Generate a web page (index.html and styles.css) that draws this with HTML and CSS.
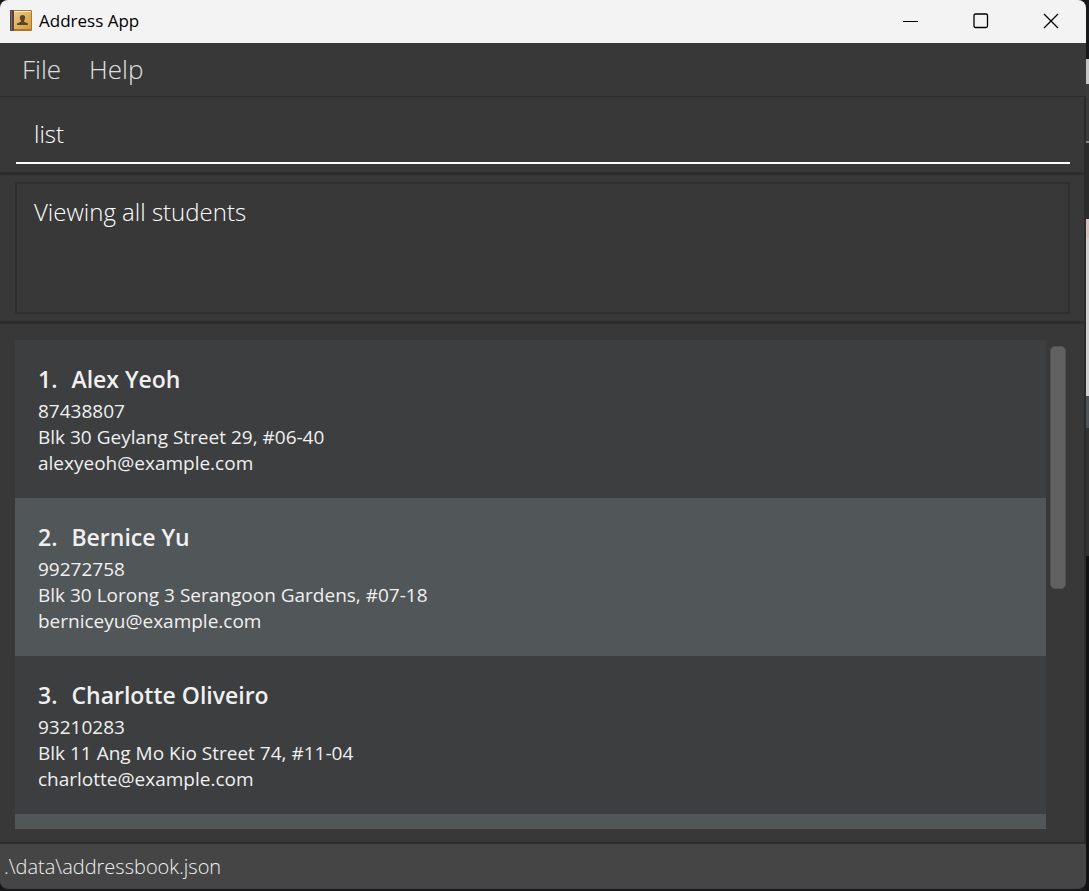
FILE: index.html
```html
<!DOCTYPE html>
<html lang="en">
<head>
<meta charset="utf-8">
<title>Address App</title>
<link rel="stylesheet" href="styles.css">
</head>
<body>
<div class="window">
  <header class="titlebar">
    <svg class="app-icon" width="22" height="22" viewBox="0 0 22 22" aria-hidden="true">
      <defs>
        <linearGradient id="cover" x1="0" y1="0" x2="1" y2="1">
          <stop offset="0" stop-color="#edc98a"/>
          <stop offset="1" stop-color="#d39b3c"/>
        </linearGradient>
      </defs>
      <rect x="0" y="0" width="22" height="21" rx="1" fill="#a8772c"/>
      <rect x="4" y="1" width="17" height="1" fill="#fff3d8"/>
      <rect x="4" y="2" width="17" height="17" fill="url(#cover)"/>
      <rect x="0" y="0" width="4" height="21" rx="1" fill="#54443d"/>
      <rect x="1" y="1" width="1" height="19" fill="#7c6b62"/>
      <path d="M12.500 5c1.700 0 2.700 1.200 2.700 2.800 0 1.200-.6 2-1.100 2.700v1.300l3.900 1.600V15H7v-1.600l3.900-1.600v-1.300c-.5-.7-1.100-1.500-1.100-2.700C9.800 6.200 10.800 5 12.500 5z" fill="#5b4526"/>
    </svg>
    <h1 class="title">Address App</h1>
    <div class="window-controls">
      <button class="control" aria-label="Minimize"><svg width="16" height="16" viewBox="0 0 16 16"><path d="M0 8.500h15" stroke="#000" fill="none"/></svg></button>
      <button class="control" aria-label="Maximize"><svg width="16" height="16" viewBox="0 0 16 16"><rect x="1" y="1" width="13.500" height="13.500" rx="1.500" stroke="#000" stroke-width="1.300" fill="none"/></svg></button>
      <button class="control" aria-label="Close"><svg width="16" height="16" viewBox="0 0 16 16"><path d="M1 1l14 14M15 1L1 15" stroke="#000" stroke-width="1.300" fill="none"/></svg></button>
    </div>
  </header>
  <nav class="menubar">
    <button class="menu">File</button>
    <button class="menu">Help</button>
  </nav>
  <main class="content">
    <section class="pane command-pane">
      <input class="command" type="text" value="list" aria-label="Command">
    </section>
    <section class="pane result-pane">
      <textarea class="result" readonly aria-label="Result">Viewing all students</textarea>
    </section>
    <section class="list-pane">
      <ul class="people">
        <li class="person">
          <h2 class="name"><span>1.</span><span>Alex Yeoh</span></h2>
          <p class="detail">87438807</p>
          <p class="detail">Blk 30 Geylang Street 29, #06-40</p>
          <p class="detail">alexyeoh@example.com</p>
        </li>
        <li class="person">
          <h2 class="name"><span>2.</span><span>Bernice Yu</span></h2>
          <p class="detail">99272758</p>
          <p class="detail">Blk 30 Lorong 3 Serangoon Gardens, #07-18</p>
          <p class="detail">berniceyu@example.com</p>
        </li>
        <li class="person">
          <h2 class="name"><span>3.</span><span>Charlotte Oliveiro</span></h2>
          <p class="detail">93210283</p>
          <p class="detail">Blk 11 Ang Mo Kio Street 74, #11-04</p>
          <p class="detail">charlotte@example.com</p>
        </li>
        <li class="person"></li>
      </ul>
      <div class="scrollbar"><div class="thumb"></div></div>
    </section>
  </main>
  <footer class="statusbar">.\data\addressbook.json</footer>
</div>
<div class="desktop"></div>
</body>
</html>
```
FILE: styles.css
```css
* {
  box-sizing: border-box;
  margin: 0;
  padding: 0;
}

body {
  display: flex;
  height: 100vh;
  overflow: hidden;
  background: #18181a;
  font-family: "Open Sans", "Noto Sans", sans-serif;
}

button,
input,
textarea {
  border: 0;
  background: none;
  font-family: inherit;
}

.window {
  display: flex;
  flex: 1;
  flex-direction: column;
  min-width: 0;
  margin-bottom: 2px;
  border-bottom: 1px solid #404142;
  border-radius: 8px;
  overflow: hidden;
  background: #383838;
}

.desktop {
  width: 3px;
  background: linear-gradient(#18181a 59px, #c4c4c4 59px 84px, #3a3a3a 84px 141px, #8a8a8a 141px 143px, #2b2b2b 143px 219px, #d5c3c0 219px 238px, #d0d0d0 238px 396px, #4d5356 396px 428px, #333 428px 556px, #111114 556px);
}

.titlebar {
  display: flex;
  flex: none;
  align-items: center;
  height: 43px;
  padding: 0 0 2px 10px;
  background: #f3f3f3;
}

.title {
  margin-left: 7px;
  color: #000;
  font-size: 17px;
  font-weight: 400;
  line-height: 24px;
}

.window-controls {
  display: flex;
  height: 100%;
  margin-left: auto;
}

.control {
  display: grid;
  width: 70px;
  place-items: center;
}

.menubar {
  display: flex;
  flex: none;
  gap: 28px;
  height: 53px;
  padding: 0 22px 2px;
}

.menu {
  color: #e0e0e0;
  font-size: 26px;
  font-weight: 300;
}

.content {
  display: flex;
  flex: 1;
  flex-direction: column;
  min-height: 0;
  border: solid #2b2b2b;
  border-width: 1px 2px 2px 0;
}

.pane {
  flex: none;
  border-bottom: 3px solid #2c2c2c;
}

.command-pane {
  padding: 10px 14px 8px 16px;
}

.command {
  display: block;
  width: 100%;
  height: 57px;
  padding: 0 18px 2px;
  border-bottom: 2px solid #fff;
  color: #fff;
  font-size: 24px;
  font-weight: 300;
}

.result-pane {
  padding: 7px 14px 7px 15px;
}

.result {
  display: block;
  width: 100%;
  height: 132px;
  padding: 11px 17px;
  border: 2px solid #2f2f2f;
  color: #fff;
  font-size: 24px;
  font-weight: 300;
  line-height: 34px;
  resize: none;
}

.list-pane {
  display: flex;
  flex: 1;
  gap: 4px;
  min-height: 0;
  padding: 16px 18px 13px 15px;
}

.people {
  flex: 1;
  overflow: hidden;
  list-style: none;
}

.person {
  height: 158px;
  padding: 21px 23px;
  background: #3c3e3f;
  color: #f0f0f0;
}

.person:nth-child(even) {
  background: #515658;
}

.name {
  display: flex;
  gap: 14px;
  font-size: 23px;
  font-weight: 600;
  line-height: 37px;
}

.detail {
  font-size: 19px;
  line-height: 26px;
}

.scrollbar {
  width: 16px;
  padding: 6px 0;
}

.thumb {
  height: 51%;
  border: 1px solid #535353;
  border-radius: 5px;
  background: #616161;
}

.statusbar {
  flex: none;
  height: 44px;
  padding: 0 4px;
  background: #454545;
  color: #f0f0f0;
  font-size: 20px;
  font-weight: 300;
  line-height: 46px;
}
```
